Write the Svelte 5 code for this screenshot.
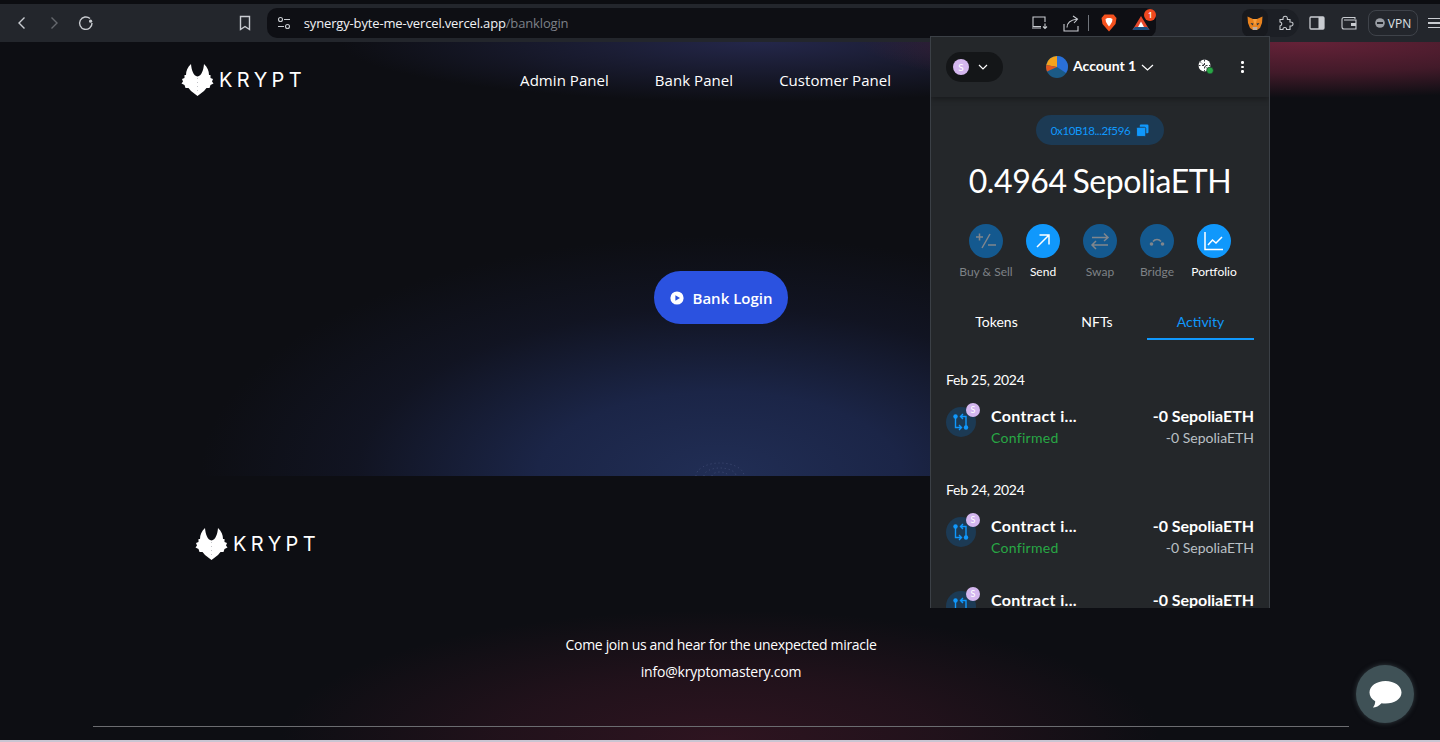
<script>
	const navLinks = ['Admin Panel', 'Bank Panel', 'Customer Panel'];

	const actions = [
		{ label: 'Buy & Sell', active: false, icon: 'buy' },
		{ label: 'Send', active: true, icon: 'send' },
		{ label: 'Swap', active: false, icon: 'swap' },
		{ label: 'Bridge', active: false, icon: 'bridge' },
		{ label: 'Portfolio', active: true, icon: 'portfolio' }
	];

	// the last row is cut by the popup edge, only its title line shows
	const activity = [
		{ date: 'Feb 25, 2024', status: 'Confirmed', fiat: '-0 SepoliaETH' },
		{ date: 'Feb 24, 2024', status: 'Confirmed', fiat: '-0 SepoliaETH' },
		{ date: '', status: '', fiat: '' }
	];
</script>

{#snippet logo()}
	<div class="logo">
		<svg width="33" height="32" viewBox="0 0 33 32">
			<path
				fill="#fff"
				d="M10 0 C10.5 6 12.5 12 16.5 12.5 C20.5 12 22.5 6 23 0 C26.5 3 28 7 28 11 L29.5 11 L29.5 14 L32 15 L31 17.5 L32.5 19.5 L29.5 21 L28.5 24 L25.5 24 L23 27 L16.5 32 L10 27 L7.5 24 L4.5 24 L3.5 21 L0.5 19.5 L2 17.5 L1 15 L3.5 14 L3.5 11 L5 11 C5 7 6.5 3 10 0 Z"
			/>
			<path stroke="#c4c5c9" stroke-width="1" stroke-dasharray="1 3" d="M16.5 14 V29" />
		</svg>
		<span>KRYPT</span>
	</div>
{/snippet}

<div class="page">
	<header class="toolbar">
		<button class="tool" aria-label="Back">
			<svg width="16" height="16" viewBox="0 0 16 16"><path d="M10.5 2.5 L5 8 L10.5 13.5" class="line" /></svg>
		</button>
		<button class="tool dim" aria-label="Forward">
			<svg width="16" height="16" viewBox="0 0 16 16"><path d="M5.5 2.5 L11 8 L5.5 13.5" class="line" /></svg>
		</button>
		<button class="tool" aria-label="Reload">
			<svg width="16" height="16" viewBox="0 0 16 16">
				<path d="M12 3.6 A6.2 6.2 0 1 0 14 8" class="line" />
				<circle cx="12.6" cy="6.2" r="1.6" fill="#c9ccd1" />
			</svg>
		</button>
		<button class="tool bookmark" aria-label="Bookmark">
			<svg width="16" height="16" viewBox="0 0 16 16"><path d="M3.5 1.5 H12.5 V14.5 L8 11.5 L3.5 14.5 Z" class="line" /></svg>
		</button>

		<div class="urlbar">
			<svg class="site" width="14" height="14" viewBox="0 0 14 14">
				<circle cx="3.5" cy="3.5" r="2" class="thin" />
				<path d="M7 3.5 H13 M1 10.5 H7" class="thin" />
				<circle cx="10.5" cy="10.5" r="2" class="thin" />
			</svg>
			<span class="url">synergy-byte-me-vercel.vercel.app<span class="path">/banklogin</span></span>
			<div class="url-icons">
				<svg width="18" height="16" viewBox="0 0 18 16">
					<path d="M10 11.5 H2 V2 H14 V7 M1 13 H10" class="thin" />
					<path d="M14 8.5 V13.5 M12 11.5 L14 13.5 L16 11.5" class="thin" />
				</svg>
				<svg class="share" width="18" height="17" viewBox="0 0 18 17">
					<path d="M2 9 V16 H16 V11 M5 12.5 Q5 5.5 15 4 M11 1 L15.5 4 L12 8" class="thin" />
				</svg>
				<i class="divider"></i>
				<svg class="brave" width="16" height="18" viewBox="0 0 16 18">
					<path fill="#f4511e" d="M3.5 0.5 H12.5 L15.5 4 L14.5 10 L8 17.5 L1.5 10 L0.5 4 Z" />
					<path fill="#fff" d="M4.5 5 L6.5 4 H9.5 L11.5 5 L11 8 L9.5 10.5 L8 12.5 L6.5 10.5 L5 8 Z" />
				</svg>
				<span class="bat">
					<svg width="18" height="16" viewBox="0 0 18 16">
						<path fill="#e5482b" d="M9 1 L17.5 15 H0.5 Z" />
						<path fill="#1c4f80" d="M2.8 12 H15.2 L17.5 15 H0.5 Z" />
						<path fill="#fff" d="M9 6.5 L12 12 H6 Z" />
					</svg>
					<b>1</b>
				</span>
			</div>
		</div>

		<div class="extensions">
			<span class="fox-box">
				<svg width="16" height="15" viewBox="0 0 16 15">
					<path fill="#e8821e" d="M0.5 0.5 L6 3 H10 L15.5 0.5 L15 7 L13 12 L10 14 H6 L3 12 L1 7 Z" />
					<path fill="#c0ad9e" d="M5.5 11 H10.5 L10 14 H6 Z" />
					<path fill="#233447" d="M3.5 7 L6.5 7.5 L5.5 9.5 Z M12.5 7 L9.5 7.5 L10.5 9.5 Z" />
					<path fill="#f6a040" d="M6 3 H10 L9 7 L8 10 L7 7 Z" />
				</svg>
			</span>
			<span class="puzzle">
				<svg width="16" height="16" viewBox="0 0 16 16">
					<path d="M2 4.5 H5 Q4.8 1.2 7.2 1.2 Q9.6 1.2 9.4 4.5 H12 V7 Q15 6.8 15 9 Q15 11.2 12 11 V14.5 H8.5 Q8.8 12.5 6.8 12.5 Q4.8 12.5 5 14.5 H2 V11 Q3.8 10.5 3.8 8.8 Q3.8 7.2 2 7 Z" class="thin" />
				</svg>
			</span>
		</div>
		<svg class="panel" width="16" height="14" viewBox="0 0 16 14">
			<rect x="1" y="1" width="14" height="12" rx="1" fill="none" stroke="#c9ccd1" stroke-width="1.3" />
			<rect x="9.5" y="1" width="5.5" height="12" fill="#c9ccd1" />
		</svg>
		<svg class="wallet" width="16" height="14" viewBox="0 0 16 14">
			<path d="M14 3 V1.5 H3 Q1 1.5 1 3.5 V11 Q1 13 3 13 H15 V4 H3" class="thin" />
			<rect x="10" y="7" width="5" height="3" fill="#c9ccd1" />
		</svg>
		<div class="vpn">
			<svg width="10" height="10" viewBox="0 0 10 10">
				<circle cx="5" cy="5" r="4.8" fill="#9a9ea5" />
				<rect x="2" y="4" width="6" height="2" fill="#23262c" />
			</svg>
			<span>VPN</span>
		</div>
		<div class="menu"><i></i><i></i><i></i></div>
	</header>

	<section class="hero">
		<nav class="topnav">
			{@render logo()}
			<ul>
				{#each navLinks as link}
					<li>{link}</li>
				{/each}
			</ul>
		</nav>
		<button class="login">
			<svg width="14" height="14" viewBox="0 0 14 14">
				<circle cx="7" cy="7" r="6.6" fill="#fff" />
				<path d="M5.4 4.2 L10 7 L5.4 9.8 Z" fill="#2b52e0" />
			</svg>
			Bank Login
		</button>
		<svg class="ripple" width="52" height="14" viewBox="0 0 52 14">
			<path d="M2 14 A24 13 0 0 1 50 14 M10 14 A16 8 0 0 1 42 14 M18 14 A8 4 0 0 1 34 14" />
		</svg>
	</section>

	<footer class="footer">
		<div class="footer-logo">
			{@render logo()}
		</div>
		<p class="join">Come join us and hear for the unexpected miracle</p>
		<p class="mail">info@kryptomastery.com</p>
		<hr />
	</footer>

	<button class="chat" aria-label="Open chat">
		<svg width="33" height="29" viewBox="0 0 33 29">
			<path
				fill="#fff"
				d="M16.5 1 C25.5 1 32.5 6 32.5 12.5 C32.5 19 25.5 23.5 16.5 23.5 C15 23.5 13.5 23.4 12.5 23.2 C10 26 7 27.4 3.8 27.6 C5.4 25.8 6.2 23.8 6.2 21.3 C2.6 19.2 0.5 16 0.5 12.5 C0.5 6 7.5 1 16.5 1 Z"
			/>
		</svg>
	</button>

	<aside class="wallet-popup">
		<div class="popup-head">
			<div class="network">
				<span class="token">S</span>
				<svg width="10" height="6" viewBox="0 0 10 6"><path d="M1 1 L5 5 L9 1" class="chev" /></svg>
			</div>
			<div class="account">
				<svg width="22" height="22" viewBox="0 0 22 22">
					<circle cx="11" cy="11" r="11" fill="#1b5a85" />
					<path d="M11 11 L11 0 A11 11 0 0 1 22 11 A11 11 0 0 1 20 17 Z" fill="#2a6fd8" />
					<path d="M11 11 L11 0 A11 11 0 0 0 0.3 9 Z" fill="#f5a31c" />
					<path d="M11 11 L0.3 9 A11 11 0 0 0 1 15.5 Z" fill="#e2571e" />
				</svg>
				<strong>Account 1</strong>
				<svg width="13" height="7" viewBox="0 0 13 7"><path d="M1 1 L6.5 6 L12 1" class="chev" /></svg>
			</div>
			<div class="connect">
				<svg width="16" height="16" viewBox="0 0 16 16">
					<circle cx="6.5" cy="6.5" r="6" fill="#fff" />
					<path d="M6.5 0.5 V12.5 M0.5 6.5 H12.5 M2 2.5 L11 11" stroke="#24272a" stroke-width="0.9" stroke-dasharray="2 1.5" />
					<circle cx="12" cy="11.5" r="3.4" fill="#28a745" stroke="#24272a" stroke-width="0.6" />
				</svg>
			</div>
			<div class="kebab"><i></i><i></i><i></i></div>
		</div>

		<div class="popup-body">
			<div class="address">
				<span>0x10B18...2f596</span>
				<svg width="13" height="13" viewBox="0 0 12 12">
					<rect x="3.5" y="0.5" width="8" height="8" rx="1" fill="#1098fc" />
					<rect x="0.5" y="3" width="8.5" height="8.5" rx="1.2" fill="#1098fc" stroke="#1c3a54" stroke-width="0.8" />
				</svg>
			</div>

			<div class="balance">0.4964 SepoliaETH</div>

			<div class="actions">
				{#each actions as action}
					<div class="action" class:active={action.active}>
						<span class="circle">
							<svg width="22" height="22" viewBox="0 0 22 22">
								{#if action.icon === 'buy'}
									<path d="M1 7 H8 M4.5 3.5 V10.5 M15 4 L7 18 M13 15 H21" class="stroke" />
								{:else if action.icon === 'send'}
									<path d="M5 17 L17 5 M7.5 5 H17 V14.5" class="stroke" />
								{:else if action.icon === 'swap'}
									<path d="M3 7.5 H19 M15 3.5 L19 7.5 L15 11 M19 15 H3 M7 11 L3 15 L7 19" class="stroke" />
								{:else if action.icon === 'bridge'}
									<path d="M7 11.5 A5 5 0 0 1 15 11.5" class="stroke" />
									<circle cx="5.5" cy="14" r="1.8" class="dot" />
									<circle cx="16.5" cy="14" r="1.8" class="dot" />
								{:else}
									<path d="M2 2 V19.5 H20 M5 15 L9.5 10 L13 13 L19 7" class="stroke" />
								{/if}
							</svg>
						</span>
						<span class="action-label">{action.label}</span>
					</div>
				{/each}
			</div>

			<div class="tabs">
				<span>Tokens</span>
				<span>NFTs</span>
				<span class="selected">Activity</span>
			</div>

			<div class="activity">
				{#each activity as item}
					{#if item.date}
						<div class="date">{item.date}</div>
					{/if}
					<div class="row">
						<span class="tx-icon">
							<svg width="18" height="18" viewBox="0 0 18 18">
								<circle cx="3.5" cy="3.5" r="2.2" fill="#1098fc" />
								<circle cx="14" cy="14.5" r="2.2" fill="#1098fc" />
								<path d="M3.5 5 V14.5 H9 M7 12 L9.5 14.5 L7 17 M14 13 V3.5 H8.5 M11 1 L8.5 3.5 L11 6" fill="none" stroke="#1098fc" stroke-width="1.4" />
							</svg>
							<span class="tx-badge">S</span>
						</span>
						<div class="tx-left">
							<div class="tx-title">Contract i...</div>
							{#if item.status}
								<div class="tx-status">{item.status}</div>
							{/if}
						</div>
						<div class="tx-right">
							<div class="tx-amount">-0 SepoliaETH</div>
							{#if item.fiat}
								<div class="tx-fiat">{item.fiat}</div>
							{/if}
						</div>
					</div>
				{/each}
			</div>
		</div>
	</aside>
</div>

<style>
	:global(body) {
		margin: 0;
		background: #0d0e13;
	}

	.page {
		position: relative;
		width: 1440px;
		height: 742px;
		overflow: hidden;
		display: flex;
		flex-direction: column;
		background: #0d0e13;
		font-family: 'Open Sans', sans-serif;
		color: #fff;
	}

	button {
		border: none;
		padding: 0;
		font: inherit;
		color: inherit;
		background: none;
	}

	/* browser chrome */
	.toolbar {
		flex: 0 0 38px;
		border-top: 4px solid #0c0d11;
		background: #23262c;
		display: flex;
		align-items: center;
		padding-left: 6px;
	}

	.tool {
		width: 32px;
		height: 32px;
		display: flex;
		align-items: center;
		justify-content: center;
	}

	.tool.dim {
		opacity: 0.4;
	}

	.tool.bookmark {
		margin-left: 127px;
	}

	.line,
	.thin {
		fill: none;
		stroke: #c9ccd1;
		stroke-width: 1.4;
	}

	.thin {
		stroke-width: 1.1;
	}

	.urlbar {
		width: 891px;
		height: 30px;
		margin-left: 6px;
		border-radius: 10px;
		background: #0e0f14;
		display: flex;
		align-items: center;
		padding-left: 10px;
		box-sizing: border-box;
	}

	.url {
		margin-left: 13px;
		font-size: 13px;
		letter-spacing: -0.15px;
		color: #f1f2f4;
	}

	.path {
		color: #7d8188;
	}

	.url-icons {
		margin-left: auto;
		display: flex;
		align-items: center;
		width: 125px;
		flex: 0 0 auto;
	}

	.share {
		margin-left: 13px;
	}

	.divider {
		width: 1px;
		height: 16px;
		background: #70747b;
		margin-left: 8px;
	}

	.brave {
		margin-left: 12px;
	}

	.bat {
		position: relative;
		display: flex;
		margin-left: 15px;
	}

	.bat b {
		position: absolute;
		top: -6px;
		right: -6px;
		width: 12px;
		height: 12px;
		border-radius: 50%;
		background: #f0481f;
		font: 600 8px/12px 'Open Sans', sans-serif;
		text-align: center;
	}

	.extensions {
		margin-left: 86px;
		width: 57px;
		height: 28px;
		border-radius: 14px;
		background: #1c1f25;
		display: flex;
		align-items: center;
	}

	.fox-box {
		width: 26px;
		height: 28px;
		display: flex;
		align-items: center;
		justify-content: center;
		background: #17191e;
		border-radius: 8px;
	}

	.puzzle {
		margin-left: 10px;
		display: flex;
	}

	.panel {
		margin-left: 10px;
	}

	.wallet {
		margin-left: 16px;
	}

	.vpn {
		margin-left: 11px;
		width: 50px;
		height: 26px;
		box-sizing: border-box;
		border: 1px solid #3f434a;
		border-radius: 8px;
		display: flex;
		align-items: center;
		justify-content: center;
		gap: 3px;
		font-size: 12px;
		color: #dfe1e5;
	}

	.menu {
		margin-left: 10px;
		display: flex;
		flex-direction: column;
		gap: 3px;
	}

	.menu i {
		display: block;
		width: 12px;
		height: 1.5px;
		background: #c9ccd1;
	}

	/* page */
	.hero {
		height: 434px;
		flex: 0 0 auto;
		position: relative;
		display: flex;
		flex-direction: column;
		align-items: center;
		background:
			radial-gradient(ellipse 520px 240px at 720px 434px, #212e55 0%, #1b2547 35%, rgba(20, 24, 44, 0.6) 70%, rgba(13, 14, 19, 0) 100%),
			radial-gradient(ellipse 440px 56px at 1300px 0, #652238 0%, rgba(101, 34, 56, 0.6) 55%, rgba(13, 14, 19, 0) 100%),
			radial-gradient(ellipse 420px 60px at 760px 0, #24274a 0%, rgba(36, 39, 74, 0) 100%),
			#0d0e13;
	}

	.ripple {
		position: absolute;
		left: 694px;
		bottom: 0;
	}

	.ripple path {
		fill: none;
		stroke: #46527c;
		stroke-width: 0.8;
		stroke-dasharray: 1 3;
	}

	.topnav {
		width: 100%;
		box-sizing: border-box;
		padding: 22px 0 0 181px;
		display: flex;
		align-items: center;
	}

	.logo {
		display: flex;
		align-items: center;
		gap: 5px;
	}

	.logo span {
		font-family: 'Inter', sans-serif;
		font-weight: 400;
		font-size: 20px;
		letter-spacing: 4.4px;
		color: #fff;
	}

	.topnav ul {
		list-style: none;
		margin: 0 0 0 214px;
		padding: 0;
		display: flex;
		gap: 46px;
		font-size: 15px;
		letter-spacing: 0.05px;
	}

	.login {
		margin: 175px 0 0 2px;
		width: 134px;
		height: 53px;
		border-radius: 27px;
		background: #2b52e0;
		display: flex;
		align-items: center;
		justify-content: center;
		gap: 9px;
		font-size: 15px;
		font-weight: 600;
	}

	.footer {
		flex: 1;
		display: flex;
		flex-direction: column;
		align-items: center;
		border-bottom: 2px solid #c9c5d2;
		background: radial-gradient(ellipse 440px 130px at 720px 264px, #2e1420 0%, rgba(46, 20, 32, 0.6) 50%, rgba(13, 14, 19, 0) 100%), #0d0e13;
	}

	.footer-logo {
		align-self: flex-start;
		margin: 52px 0 0 195px;
	}

	.footer p {
		margin: 0;
		font-size: 14px;
		line-height: 27px;
		margin-left: 2px;
	}

	.join {
		padding-top: 71px;
		letter-spacing: -0.33px;
	}

	.mail {
		letter-spacing: -0.18px;
	}

	.footer hr {
		width: 1256px;
		margin: 41px 0 0 2px;
		border: none;
		height: 1px;
		background: #6b6c70;
	}

	.chat {
		position: absolute;
		left: 1356px;
		top: 665px;
		width: 58px;
		height: 58px;
		border-radius: 50%;
		background: #3f5156;
		box-shadow: 0 0 5px rgba(90, 110, 115, 0.5);
		display: flex;
		align-items: center;
		justify-content: center;
	}

	/* wallet extension popup */
	.wallet-popup {
		position: absolute;
		left: 930px;
		top: 36px;
		width: 340px;
		height: 572px;
		box-sizing: border-box;
		border: 1px solid #3b4046;
		border-bottom: none;
		background: #24272a;
		overflow: hidden;
		font-family: 'Lato', sans-serif;
		color: #fff;
	}

	.popup-head {
		height: 60px;
		box-shadow: 0 2px 6px rgba(0, 0, 0, 0.35);
		display: flex;
		align-items: center;
		padding-left: 15px;
		position: relative;
	}

	.network {
		width: 57px;
		height: 30px;
		border-radius: 15px;
		background: #141618;
		display: flex;
		align-items: center;
		padding-left: 7px;
		box-sizing: border-box;
		gap: 9px;
	}

	.token {
		width: 16px;
		height: 16px;
		border-radius: 50%;
		background: #d4b7ef;
		color: #fff;
		font-size: 10px;
		line-height: 16px;
		text-align: center;
	}

	.chev {
		fill: none;
		stroke: #fff;
		stroke-width: 1.2;
	}

	.account {
		margin-left: 43px;
		display: flex;
		align-items: center;
		gap: 5px;
	}

	.account strong {
		font-size: 14px;
		font-weight: 700;
		line-height: 20px;
		margin-top: -2px;
	}

	.connect {
		margin-left: 44px;
		display: flex;
	}

	.kebab {
		margin-left: 27px;
		display: flex;
		flex-direction: column;
		gap: 2px;
	}

	.kebab i {
		width: 2.4px;
		height: 2.4px;
		border-radius: 50%;
		background: #fff;
	}

	.popup-body {
		display: flex;
		flex-direction: column;
		align-items: center;
		padding: 18px 15px 0;
	}

	.address {
		width: 128px;
		height: 30px;
		border-radius: 15px;
		background: #1c3a54;
		color: #1098fc;
		display: flex;
		align-items: center;
		justify-content: center;
		gap: 6px;
		font-size: 11.5px;
		letter-spacing: -0.4px;
	}

	.balance {
		margin-top: 16px;
		font-size: 32px;
		line-height: 40px;
		letter-spacing: -0.4px;
		word-spacing: -2px;
		white-space: nowrap;
	}

	.actions {
		margin-top: 23px;
		display: flex;
		width: 285px;
	}

	.action {
		flex: 1;
		display: flex;
		flex-direction: column;
		align-items: center;
		gap: 6px;
		color: #7e8286;
		font-size: 12px;
		white-space: nowrap;
	}

	.action.active {
		color: #fff;
	}

	.circle {
		width: 34px;
		height: 34px;
		border-radius: 50%;
		background: #14598f;
		display: flex;
		align-items: center;
		justify-content: center;
	}

	.action.active .circle {
		background: #1098fc;
	}

	.stroke {
		fill: none;
		stroke: #80868d;
		stroke-width: 1.5;
	}

	.dot {
		fill: #80868d;
	}

	.action.active .stroke {
		stroke: #fff;
	}

	.tabs {
		margin-top: 33px;
		width: 308px;
		display: grid;
		grid-template-columns: 101px 100px 107px;
		font-size: 14px;
		text-align: center;
	}

	.tabs span {
		padding-bottom: 6px;
		line-height: 20px;
		border-bottom: 2px solid transparent;
	}

	.tabs .selected {
		color: #1098fc;
		border-bottom-color: #1098fc;
	}

	.activity {
		width: 308px;
	}

	.date {
		margin-top: 31px;
		font-size: 14px;
		line-height: 20px;
		letter-spacing: -0.25px;
	}

	.activity .date:first-child {
		margin-top: 30px;
	}

	.row {
		margin-top: 15px;
		display: flex;
		height: 44px;
		margin-bottom: 30px;
	}

	.activity .row:last-child {
		margin-top: 0;
		margin-bottom: 0;
	}

	.tx-icon {
		position: relative;
		width: 30px;
		height: 30px;
		margin-top: 2px;
		border-radius: 50%;
		background: #1c3a54;
		display: flex;
		align-items: center;
		justify-content: center;
	}

	.tx-badge {
		position: absolute;
		top: -4px;
		right: -4px;
		width: 14px;
		height: 14px;
		border-radius: 50%;
		background: #d4b7ef;
		font-size: 9px;
		line-height: 14px;
		text-align: center;
	}

	.tx-left {
		margin-left: 15px;
	}

	.tx-right {
		margin-left: auto;
		text-align: right;
	}

	.tx-title,
	.tx-amount {
		font-size: 16px;
		font-weight: 700;
		line-height: 22px;
	}

	.tx-title {
		letter-spacing: 0.35px;
	}

	.tx-amount {
		letter-spacing: -0.05px;
	}

	.tx-status,
	.tx-fiat {
		font-size: 14px;
		line-height: 22px;
	}

	.tx-status {
		color: #28a745;
		letter-spacing: 0.3px;
	}

	.tx-fiat {
		color: #bbc0c5;
	}
</style>
